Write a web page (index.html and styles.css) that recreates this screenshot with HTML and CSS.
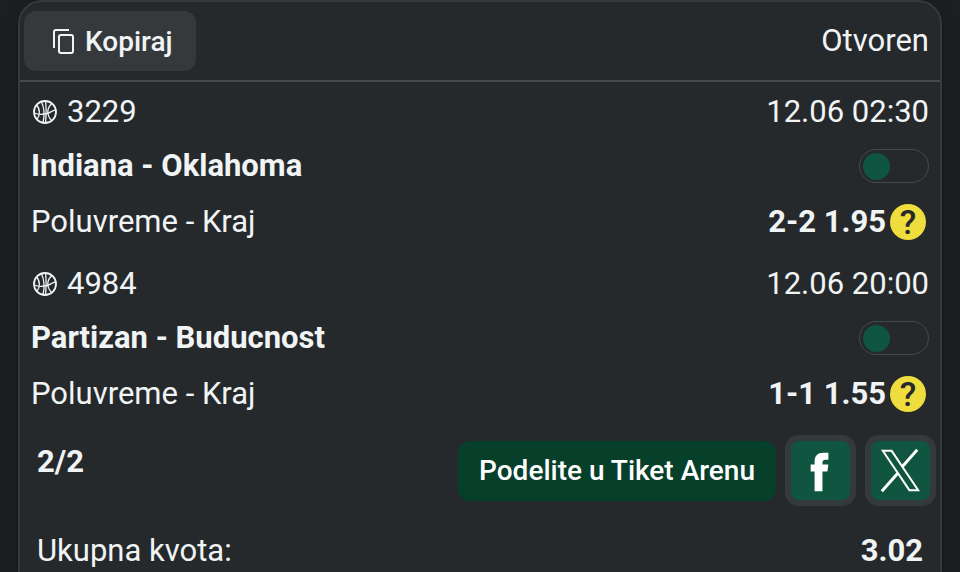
FILE: index.html
```html
<!DOCTYPE html>
<html lang="sr">

<head>
    <meta charset="UTF-8">
    <meta name="viewport" content="width=device-width, initial-scale=1">
    <title>Tiket</title>
    <link rel="stylesheet" href="styles.css">
</head>

<body>
    <svg class="symbols" aria-hidden="true">
        <symbol id="ball" viewBox="0 0 24 24">
            <g fill="none" stroke="currentColor" stroke-width="1.3">
                <circle cx="12" cy="12" r="11" stroke-width="1.8" />
                <path d="M8.500 2C11.500 8 11.500 16 10 23M12.500 1.500C13.500 8 13.500 12 12.500 23" />
                <path d="M1.500 13C6 15 10 14.500 14 13.500C17 13 19 10.500 22.500 10" />
                <path d="M3.500 5C7.500 9 7 15 4 19.500" />
                <path d="M19 3.500C13.500 8 13.500 15 18.500 20.500" />
            </g>
        </symbol>
    </svg>
    <main class="ticket">
        <header class="ticket-header">
            <button class="btn btn-copy" type="button">
                <svg class="copy-icon" viewBox="0 0 22 25" aria-hidden="true">
                    <path d="M1 19V3Q1 1 3 1H16" fill="none" stroke="currentColor" stroke-width="2" />
                    <rect x="6" y="6" width="14" height="18" rx="2" fill="none" stroke="currentColor" stroke-width="2" />
                </svg>
                <span>Kopiraj</span>
            </button>
            <span class="status">Otvoren</span>
        </header>

        <section class="match">
            <div class="row row-info">
                <span class="code"><svg class="ball" aria-hidden="true"><use href="#ball" /></svg>3229</span>
                <span>12.06 02:30</span>
            </div>
            <div class="row row-teams">
                <label for="match1">Indiana - Oklahoma</label>
                <input class="toggle" type="checkbox" id="match1">
            </div>
            <div class="row row-odds">
                <span>Poluvreme - Kraj</span>
                <span class="odds">2-2 1.95
                    <button class="help" type="button">?</button>
                </span>
            </div>
        </section>

        <section class="match">
            <div class="row row-info">
                <span class="code"><svg class="ball" aria-hidden="true"><use href="#ball" /></svg>4984</span>
                <span>12.06 20:00</span>
            </div>
            <div class="row row-teams">
                <label for="match2">Partizan - Buducnost</label>
                <input class="toggle" type="checkbox" id="match2">
            </div>
            <div class="row row-odds">
                <span>Poluvreme - Kraj</span>
                <span class="odds">1-1 1.55
                    <button class="help" type="button">?</button>
                </span>
            </div>
        </section>

        <section class="share">
            <span class="count">2/2</span>
            <div class="share-buttons">
                <button class="btn btn-arena" type="button">Podelite u Tiket Arenu</button>
                <button class="social" type="button" aria-label="Facebook">
                    <svg viewBox="0 0 60 60" aria-hidden="true">
                        <path fill="#fff" d="M24 51V31h-4v-7h4v-3c0-6 3-9 9-9h5v7h-3c-2 0-3 1-3 3v2h6l-1 7h-5v20z" />
                    </svg>
                </button>
                <button class="social" type="button" aria-label="X">
                    <svg viewBox="0 0 60 60" aria-hidden="true">
                        <path fill="none" stroke="#fff" stroke-width="2" d="M12 10h9l27 40h-9z" />
                        <path fill="none" stroke="#fff" stroke-width="3" d="M47 9L32 26M27 33L11 51" />
                    </svg>
                </button>
            </div>
        </section>

        <section class="total">
            <span>Ukupna kvota:</span>
            <b>3.02</b>
        </section>
    </main>
</body>

</html>
```

FILE: styles.css
```css
* {
    box-sizing: border-box;
}

body {
    margin: 0;
    padding: 0 18px;
    background-color: #1b1f20;
    color: #f1f4f5;
    font-family: Roboto, sans-serif;
    font-size: 31px;
    line-height: 36px;
}

button {
    padding: 0;
    border: none;
    font-family: inherit;
    color: #fff;
    cursor: pointer;
}

.symbols {
    display: none;
}

.ticket {
    min-height: 100vh;
    background-color: #25292c;
    border: 2px solid #34393b;
    border-bottom: none;
    border-radius: 24px 24px 0 0;
    box-shadow: 0 0 12px #171b1b;
}

.ticket-header {
    display: flex;
    justify-content: space-between;
    align-items: center;
    padding: 9px 11px 9px 4px;
    border-bottom: 2px solid #454b4d;
}

.btn {
    height: 60px;
    border-radius: 12px;
    font-size: 28px;
    font-weight: 500;
}

.btn-copy {
    display: flex;
    align-items: center;
    gap: 10px;
    padding: 0 23px 0 29px;
    background-color: #35393c;
    color: #f1f4f5;
}

.copy-icon {
    width: 22px;
    height: 25px;
}

.row {
    display: flex;
    justify-content: space-between;
    align-items: center;
    padding: 0 11px;
}

.row-info {
    height: 60px;
}

.row-teams {
    height: 48px;
    font-weight: bold;
}

.row-odds {
    height: 64px;
}

.code {
    display: flex;
    align-items: center;
    gap: 10px;
    padding-left: 2px;
}

.ball {
    width: 24px;
    height: 24px;
}

.toggle {
    appearance: none;
    display: flex;
    align-items: center;
    width: 70px;
    height: 34px;
    margin: 0;
    padding: 0 3px;
    border: 1px solid #45494c;
    border-radius: 17px;
    cursor: pointer;
}

.toggle::before {
    content: "";
    width: 27px;
    height: 27px;
    border-radius: 50%;
    background-color: #10553f;
}

.toggle:checked::before {
    margin-left: auto;
}

.odds {
    display: flex;
    align-items: center;
    gap: 4px;
    padding-right: 3px;
    font-weight: bold;
}

.help {
    width: 36px;
    height: 36px;
    border-radius: 50%;
    background-color: #eedd3c;
    color: #25292c;
    font-size: 34px;
    font-weight: 500;
    line-height: 36px;
}

.share {
    display: flex;
    justify-content: space-between;
    padding: 9px 4px 0 17px;
}

.count {
    padding-top: 9px;
    font-weight: bold;
}

.share-buttons {
    display: flex;
    align-items: center;
    gap: 9px;
}

.btn-arena {
    padding: 0 21px;
    background-color: #063f2a;
}

.social {
    width: 71px;
    height: 71px;
    border: 6px solid #34393c;
    border-radius: 14px;
    background-color: #34393c;
}

.social svg {
    display: block;
    width: 100%;
    border-radius: 8px;
    background-color: #10553f;
}

.total {
    display: flex;
    justify-content: space-between;
    padding: 27px 17px 0;
}
```
